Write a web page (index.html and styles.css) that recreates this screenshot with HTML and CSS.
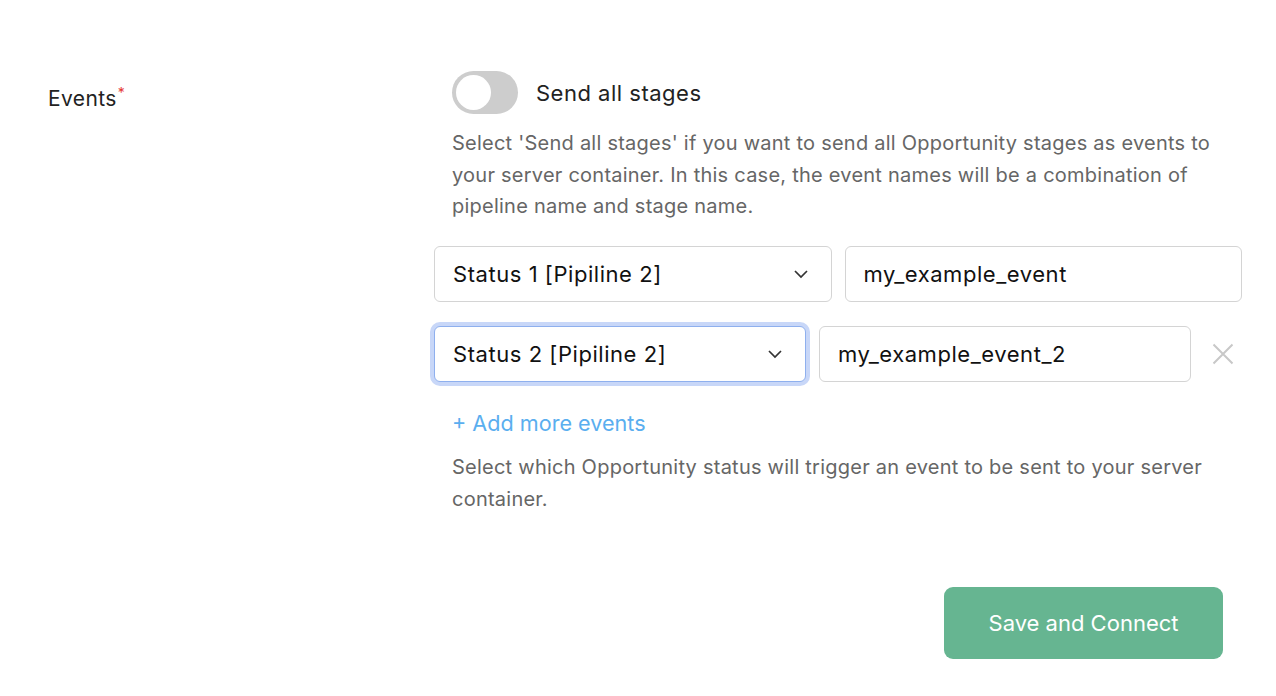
FILE: index.html
```html
<!DOCTYPE html>
<html>
<head>
<meta charset="utf-8">
<link rel="stylesheet" href="styles.css">
</head>
<body>
<div class="page">
  <div class="field">
    <div class="label">Events<span class="req">*</span></div>
    <div class="control">
      <div class="indent">
        <div class="toggle-row">
          <span class="toggle"><span class="knob"></span></span>
          <span class="toggle-text">Send all stages</span>
        </div>
        <p class="help">Select 'Send all stages' if you want to send all Opportunity stages as events to your server container. In this case, the event names will be a combination of pipeline name and stage name.</p>
      </div>
      <div class="rows">
        <div class="ev-row">
          <div class="select"><span>Status 1 [Pipiline 2]</span>
            <svg class="chev" width="16" height="10" viewBox="0 0 16 10"><path d="M2 2 L8 8 L14 2" fill="none" stroke="#333" stroke-width="1.7"/></svg>
          </div>
          <div class="input">my_example_event</div>
        </div>
        <div class="ev-row ev-row-rm">
          <div class="select focused"><span>Status 2 [Pipiline 2]</span>
            <svg class="chev" width="16" height="10" viewBox="0 0 16 10"><path d="M2 2 L8 8 L14 2" fill="none" stroke="#333" stroke-width="1.7"/></svg>
          </div>
          <div class="input">my_example_event_2</div>
          <div class="remove">
            <svg width="22" height="22" viewBox="0 0 22 22"><path d="M1.5 1.5 L20.5 20.5 M20.5 1.5 L1.5 20.5" stroke="#c8c8c8" stroke-width="2" fill="none"/></svg>
          </div>
        </div>
      </div>
      <div class="indent">
        <div class="add">+ Add more events</div>
        <p class="help help2">Select which Opportunity status will trigger an event to be sent to your server container.</p>
      </div>
    </div>
  </div>
  <div class="footer">
    <button class="btn">Save and Connect</button>
  </div>
</div>
</body>
</html>
```

FILE: styles.css
```css
html, body {
  margin: 0;
  padding: 0;
  background: #fff;
}
body {
  font-family: Inter, "Noto Sans", "Liberation Sans", sans-serif;
  color: #222;
}
.page {
  width: 1276px;
  height: 696px;
  box-sizing: border-box;
  padding-top: 71px;
}
.field {
  display: flex;
  padding-left: 48px;
}
.label {
  width: 386px;
  flex: none;
  font-size: 21px;
  letter-spacing: 0.4px;
  line-height: 24px;
  padding-top: 16px;
  color: #222;
}
.req {
  color: #e53935;
  font-size: 14px;
  vertical-align: top;
  position: relative;
  top: -6px;
  margin-left: 1px;
}
.control {
  width: 808px;
}
.indent {
  padding-left: 18px;
}
.toggle-row {
  display: flex;
  align-items: center;
  gap: 18px;
}
.toggle {
  width: 66px;
  height: 43px;
  border-radius: 22px;
  background: #cdcdcd;
  box-sizing: border-box;
  padding: 4px;
  display: flex;
  align-items: center;
}
.knob {
  width: 35px;
  height: 35px;
  border-radius: 50%;
  background: #fff;
}
.toggle-text {
  font-size: 22px;
  letter-spacing: 0.5px;
  color: #222;
}
.help {
  margin: 14px 0 0 0;
  font-size: 20px;
  letter-spacing: 0.24px;
  line-height: 31.5px;
  color: #666;
}
.rows {
  margin-top: 23px;
  display: flex;
  flex-direction: column;
  gap: 24px;
}
.ev-row {
  display: grid;
  grid-template-columns: 1fr 1fr;
  column-gap: 13px;
}
.ev-row-rm {
  grid-template-columns: 1fr 1fr 38px;
}
.select, .input {
  height: 56px;
  box-sizing: border-box;
  border: 1px solid #d4d4d4;
  border-radius: 6px;
  background: #fff;
  display: flex;
  align-items: center;
  padding: 0 22px 0 18px;
  font-size: 22px;
  letter-spacing: 0.55px;
  color: #111;
}
.select {
  justify-content: space-between;
}
.focused {
  border-color: #8fb0ee;
  box-shadow: 0 0 0 4px #c8d7f8;
}
.remove {
  display: flex;
  align-items: center;
  justify-content: center;
}
.add {
  margin-top: 26px;
  font-size: 21.6px;
  line-height: 30px;
  color: #5aaeef;
}
.help2 {
  margin-top: 13px;
  line-height: 32px;
}
.footer {
  display: flex;
  justify-content: flex-end;
  padding-right: 53px;
  margin-top: 72px;
}
.btn {
  width: 279px;
  height: 72px;
  border: none;
  border-radius: 9px;
  background: #66b591;
  color: #fff;
  font-family: Inter, "Noto Sans", "Liberation Sans", sans-serif;
  font-size: 22px;
}
```
